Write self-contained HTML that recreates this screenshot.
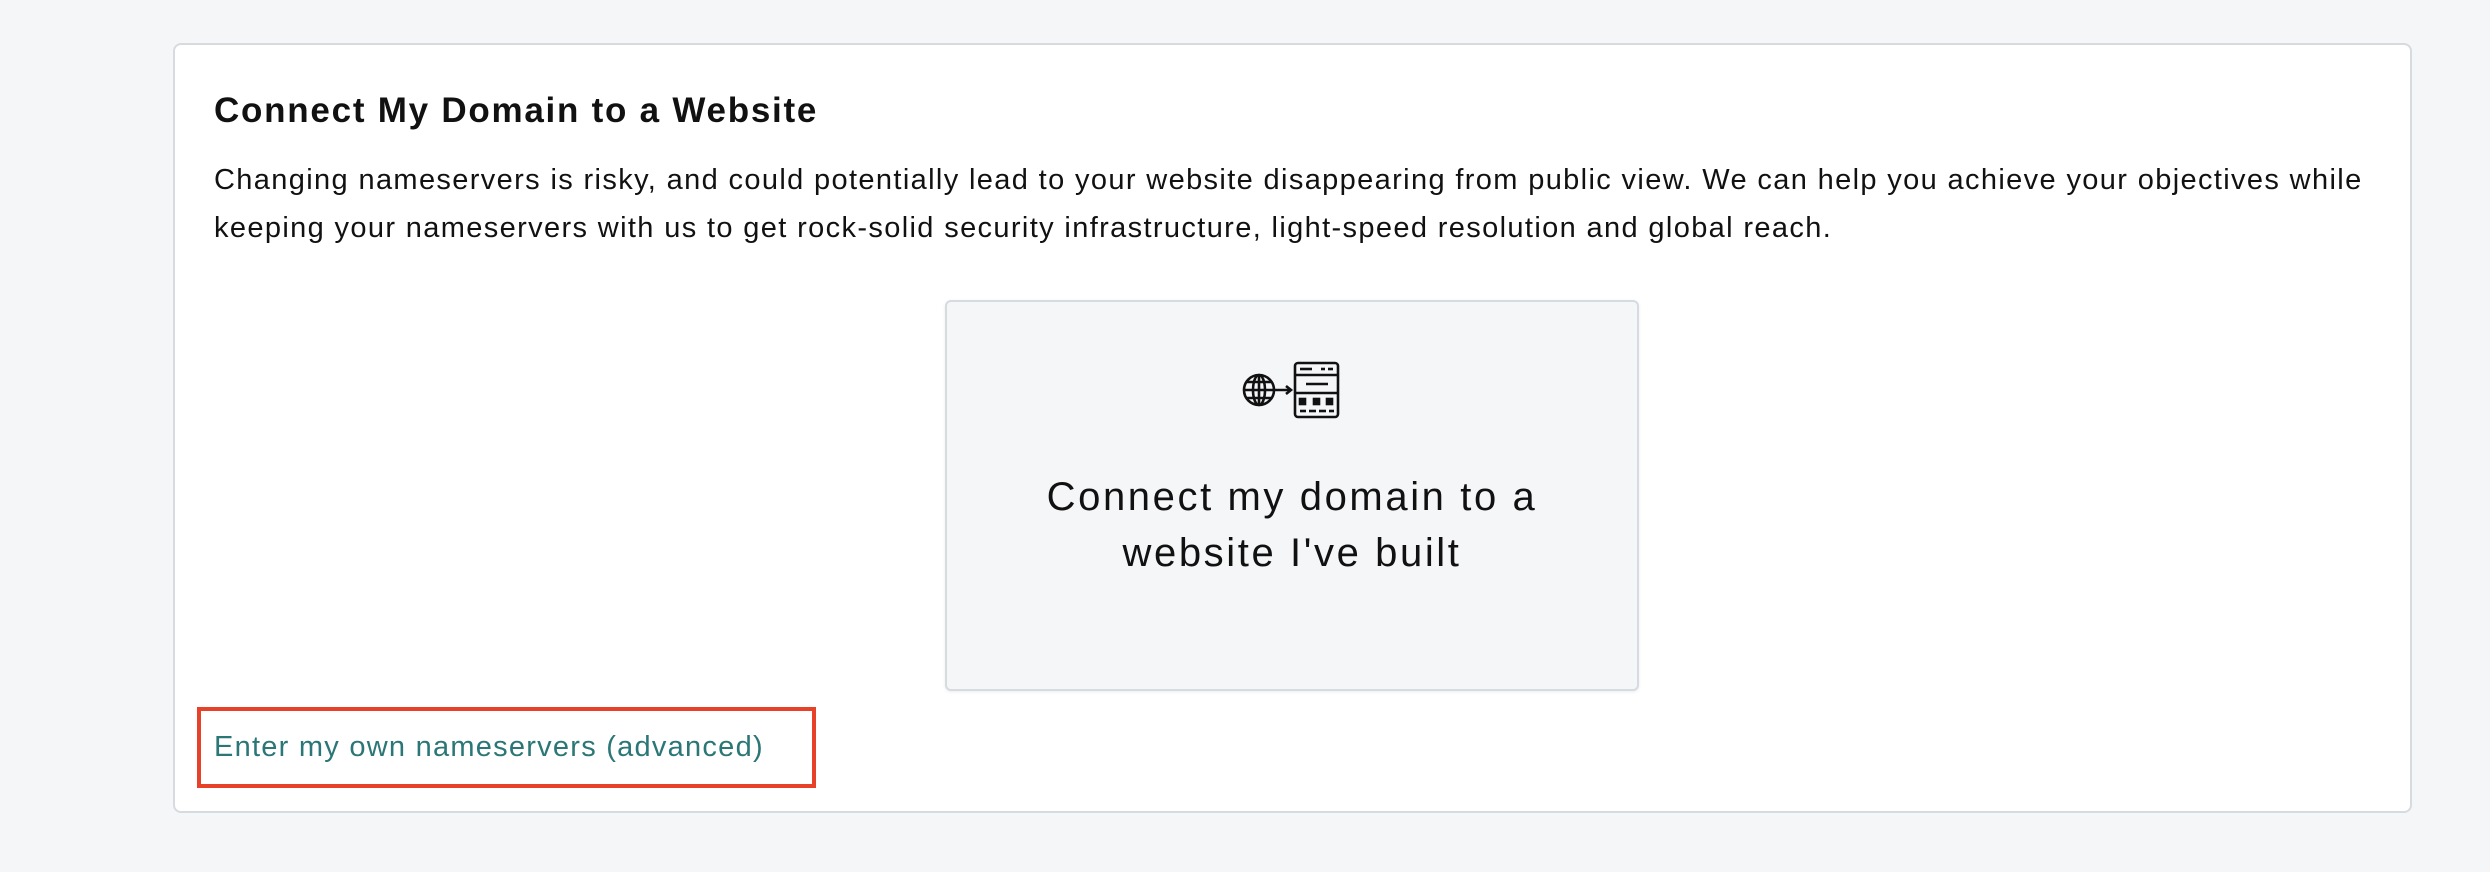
<!DOCTYPE html>
<html><head><meta charset="utf-8"><style>
html,body{margin:0;padding:0;width:2490px;height:872px;background:#f5f6f8;overflow:hidden;font-family:"Liberation Sans",sans-serif;color:#111}
.card{position:absolute;left:173px;top:43px;width:2239px;height:770px;background:#fff;border:2px solid #d6dbe0;border-radius:8px;box-sizing:border-box}
h1{position:absolute;left:214px;top:91px;margin:0;font-size:35px;font-weight:bold;letter-spacing:1.75px}
.p{position:absolute;left:214px;top:156px;width:2250px;font-size:29px;line-height:48px;letter-spacing:1.36px;white-space:nowrap}
.inner{position:absolute;left:945px;top:300px;width:694px;height:391px;background:#f5f6f8;border:2px solid #d6dbe0;border-radius:6px;box-sizing:border-box;box-shadow:0 1px 3px rgba(0,0,0,0.08)}
.it{position:absolute;left:945px;top:469px;width:694px;text-align:center;font-size:40px;line-height:56px;letter-spacing:2.6px}
.red{position:absolute;left:197px;top:707px;width:619px;height:81px;border:4px solid #e8412a;box-sizing:border-box}
.link{position:absolute;left:214px;top:731px;font-size:29px;color:#2b7676;letter-spacing:1.25px}
</style></head><body>
<div class="card"></div>
<h1>Connect My Domain to a Website</h1>
<div class="p">Changing nameservers is risky, and could potentially lead to your website disappearing from public view. We can help you achieve your objectives while<br>keeping your nameservers with us to get rock-solid security infrastructure, light-speed resolution and global reach.</div>
<div class="inner"></div>
<svg style="position:absolute;left:1240px;top:358px" width="104" height="64" viewBox="1240 358 104 64" fill="none" stroke="#111" stroke-width="2.6">
<circle cx="1259" cy="390" r="15"/>
<ellipse cx="1259" cy="390" rx="6" ry="15"/>
<line x1="1244" y1="390" x2="1290" y2="390"/>
<line x1="1246" y1="382" x2="1272" y2="382"/>
<line x1="1246" y1="398" x2="1272" y2="398"/>
<line x1="1259" y1="375" x2="1259" y2="405"/>
<path d="M1286 386 L1291 390 L1286 394"/>
<rect x="1295" y="363" width="43" height="54" rx="3"/>
<line x1="1295" y1="375" x2="1338" y2="375"/>
<line x1="1295" y1="393" x2="1338" y2="393"/>
<line x1="1300" y1="369" x2="1312" y2="369"/>
<line x1="1321" y1="369" x2="1325" y2="369"/>
<line x1="1328" y1="369" x2="1333" y2="369"/>
<line x1="1306" y1="384" x2="1328" y2="384"/>
<line x1="1300" y1="411" x2="1306" y2="411"/>
<line x1="1309" y1="411" x2="1316" y2="411"/>
<line x1="1319" y1="411" x2="1326" y2="411"/>
<line x1="1329" y1="411" x2="1334" y2="411"/>
<rect x="1300" y="399" width="5" height="5" fill="#111"/>
<rect x="1314" y="399" width="5" height="5" fill="#111"/>
<rect x="1327" y="399" width="5" height="5" fill="#111"/>
</svg>
<div class="it">Connect my domain to a<br>website I've built</div>
<div class="red"></div>
<div class="link">Enter my own nameservers (advanced)</div>
</body></html>
